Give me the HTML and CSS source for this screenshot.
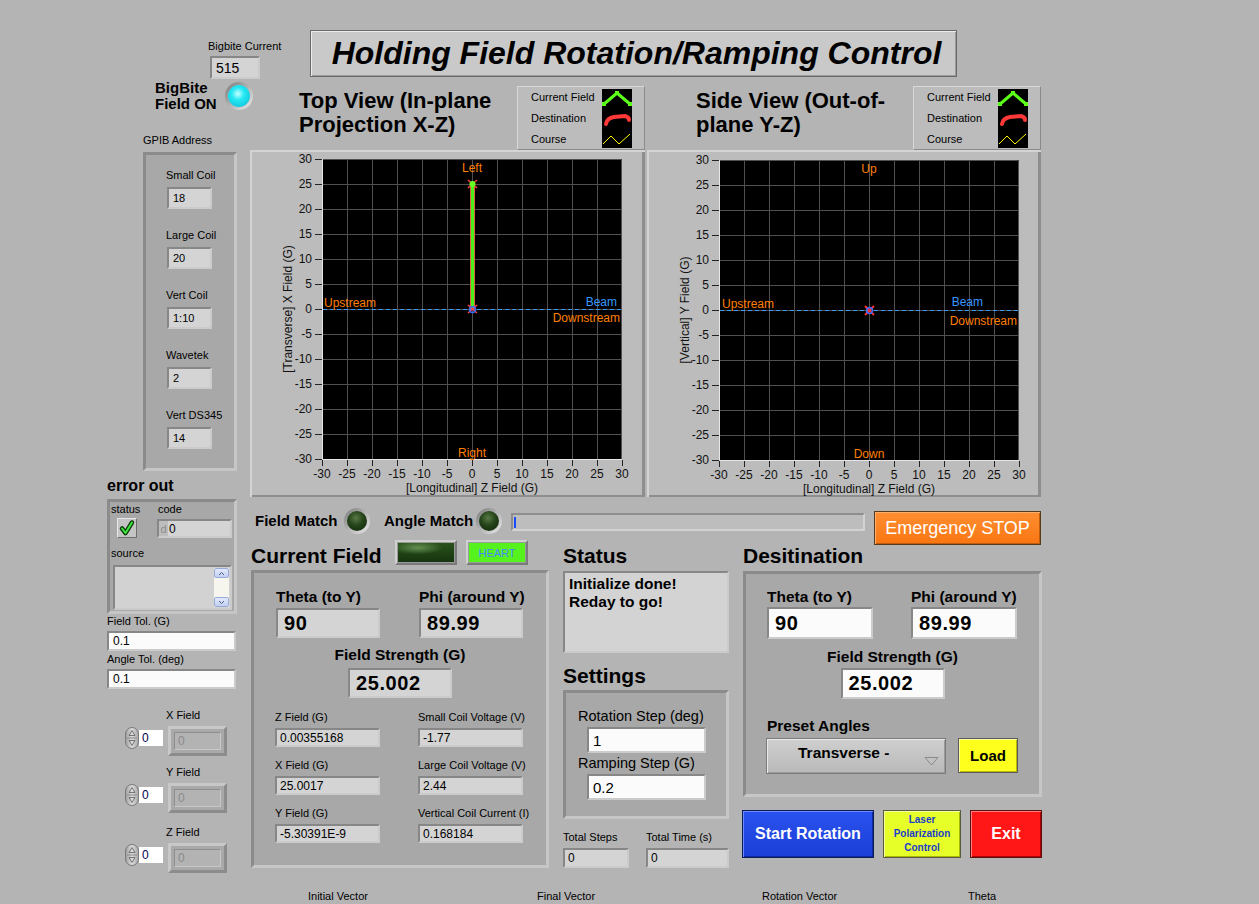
FILE: index.html
```html
<!DOCTYPE html>
<html>
<head>
<meta charset="utf-8">
<title>Holding Field Rotation/Ramping Control</title>
<link rel="stylesheet" href="styles.css">
</head>
<body>
<div class="page">
  <aside class="side">
    <div class="bbc">
      <div class="lbl">Bigbite Current</div>
      <div class="box ind bbc-box">515</div>
    </div>
    <div class="bbon">
      <div class="bbon-txt">BigBite<br>Field ON</div>
      <div class="led led-cyan"><span></span></div>
    </div>
    <div class="lbl gpib-lbl">GPIB Address</div>
    <div class="panel gpib">
      <div class="gitem"><div class="lbl">Small Coil</div><div class="box ind gbox">18</div></div>
      <div class="gitem"><div class="lbl">Large Coil</div><div class="box ind gbox">20</div></div>
      <div class="gitem"><div class="lbl">Vert Coil</div><div class="box ind gbox">1:10</div></div>
      <div class="gitem"><div class="lbl">Wavetek</div><div class="box ind gbox">2</div></div>
      <div class="gitem"><div class="lbl">Vert DS345</div><div class="box ind gbox">14</div></div>
    </div>
    <div class="errh">error out</div>
    <div class="panel errc">
      <div class="err-row">
        <div class="err-status">
          <div class="lbl">status</div>
          <div class="chk"><svg width="18" height="18" viewBox="0 0 18 18"><path d="M4 9.5 L7.5 14 L14 3.5" stroke="#0b3a0b" stroke-width="4.5" fill="none" stroke-linecap="round" stroke-linejoin="round"/><path d="M4 9.5 L7.5 14 L14 3.5" stroke="#3ee63e" stroke-width="2" fill="none" stroke-linecap="round" stroke-linejoin="round"/></svg></div>
        </div>
        <div class="err-code">
          <div class="lbl">code</div>
          <div class="box ind codebox"><span class="radix">d</span><span>0</span></div>
        </div>
      </div>
      <div class="lbl src-lbl">source</div>
      <div class="box ind srcbox">
        <div class="scroll">
          <div class="sb-btn"><svg width="9" height="5" viewBox="0 0 9 5"><path d="M2 4 L4.5 1.5 L7 4" stroke="#4a5a8a" fill="none"/></svg></div>
          <div class="sb-btn"><svg width="9" height="5" viewBox="0 0 9 5"><path d="M2 1 L4.5 3.5 L7 1" stroke="#4a5a8a" fill="none"/></svg></div>
        </div>
      </div>
    </div>
    <div class="lbl tol-lbl">Field Tol. (G)</div>
    <div class="box ctl tolbox">0.1</div>
    <div class="lbl tol-lbl2">Angle Tol. (deg)</div>
    <div class="box ctl tolbox">0.1</div>

    <div class="xyz first">
      <div class="lbl xyz-lbl">X Field</div>
      <div class="xyz-row">
        <div class="spin"><svg width="14" height="22" viewBox="0 0 14 22"><defs><linearGradient id="sg" x1="0" y1="0" x2="1" y2="0"><stop offset="0" stop-color="#9c9c9c"/><stop offset="0.5" stop-color="#dedede"/><stop offset="1" stop-color="#a4a4a4"/></linearGradient></defs><rect x="0.5" y="0.5" width="13" height="21" rx="6.5" fill="url(#sg)" stroke="#7a7a7a"/><path d="M4 8.5 L7 3.5 L10 8.5 Z M4 13.5 L7 18.5 L10 13.5 Z" fill="none" stroke="#6a6a6a" stroke-width="0.9"/><path d="M2 11H12" stroke="#8a8a8a"/></svg></div>
        <div class="xin">0</div>
        <div class="xind"><span>0</span></div>
      </div>
    </div>
    <div class="xyz">
      <div class="lbl xyz-lbl">Y Field</div>
      <div class="xyz-row">
        <div class="spin"><svg width="14" height="22" viewBox="0 0 14 22"><rect x="0.5" y="0.5" width="13" height="21" rx="6.5" fill="url(#sg)" stroke="#7a7a7a"/><path d="M4 8.5 L7 3.5 L10 8.5 Z M4 13.5 L7 18.5 L10 13.5 Z" fill="none" stroke="#6a6a6a" stroke-width="0.9"/><path d="M2 11H12" stroke="#8a8a8a"/></svg></div>
        <div class="xin">0</div>
        <div class="xind"><span>0</span></div>
      </div>
    </div>
    <div class="xyz last">
      <div class="lbl xyz-lbl">Z Field</div>
      <div class="xyz-row">
        <div class="spin"><svg width="14" height="22" viewBox="0 0 14 22"><rect x="0.5" y="0.5" width="13" height="21" rx="6.5" fill="url(#sg)" stroke="#7a7a7a"/><path d="M4 8.5 L7 3.5 L10 8.5 Z M4 13.5 L7 18.5 L10 13.5 Z" fill="none" stroke="#6a6a6a" stroke-width="0.9"/><path d="M2 11H12" stroke="#8a8a8a"/></svg></div>
        <div class="xin">0</div>
        <div class="xind"><span>0</span></div>
      </div>
    </div>
  </aside>

  <main class="main">
    <div class="title">Holding Field Rotation/Ramping Control</div>

    <div class="graphs">
      <div class="graph">
        <div class="ghead">
          <div class="gtitle">Top View (In-plane<br>Projection X-Z)</div>
          <div class="legend">
            <div class="leg-lbls"><div>Current Field</div><div>Destination</div><div>Course</div></div>
            <div class="leg-sw">
              <svg width="30" height="19" viewBox="0 0 30 19"><polyline points="2,15 8,10 15,4 22,10 28,15" stroke="#5cff1a" stroke-width="3" fill="none"/><rect x="0" y="13" width="4" height="4" fill="#5cff1a"/><rect x="13" y="2" width="4" height="4" fill="#5cff1a"/><rect x="26" y="13" width="4" height="4" fill="#5cff1a"/></svg>
              <svg width="30" height="19" viewBox="0 0 30 19"><path d="M4 15 Q5 9 12 8 L23 7 Q27 8 27 11" stroke="#ff3838" stroke-width="4" fill="none" stroke-linecap="round"/></svg>
              <svg width="30" height="19" viewBox="0 0 30 19"><polyline points="1,15 9,7 17,15 28,5" stroke="#ffff00" stroke-width="1" fill="none"/></svg>
            </div>
          </div>
        </div>
        <div class="pframe">
          <svg class="plot" width="395" height="347" viewBox="0 0 395 347">
            <rect x="72" y="9" width="300" height="300" fill="#000"/>
            <path d="M97.5 9V309M122.5 9V309M147.5 9V309M172.5 9V309M197.5 9V309M222.5 9V309M247.5 9V309M272.5 9V309M297.5 9V309M322.5 9V309M347.5 9V309M72 34.5H372M72 59.5H372M72 84.5H372M72 109.5H372M72 134.5H372M72 159.5H372M72 184.5H372M72 209.5H372M72 234.5H372M72 259.5H372M72 284.5H372M72 9.5H371.5V309" stroke="#505050" fill="none"/>
            <path d="M72.5 9V309.5H372" stroke="#e6e6e6" fill="none"/>
            <path d="M65 9.5H72M65 34.5H72M65 59.5H72M65 84.5H72M65 109.5H72M65 134.5H72M65 159.5H72M65 184.5H72M65 209.5H72M65 234.5H72M65 259.5H72M65 284.5H72M65 309.5H72M72.5 310V316M97.5 310V316M122.5 310V316M147.5 310V316M172.5 310V316M197.5 310V316M222.5 310V316M247.5 310V316M272.5 310V316M297.5 310V316M322.5 310V316M347.5 310V316M372.5 310V316" stroke="#222" fill="none"/>
            <g class="tk" text-anchor="end">
              <text x="62" y="13">30</text><text x="62" y="38">25</text><text x="62" y="63">20</text><text x="62" y="88">15</text><text x="62" y="113">10</text><text x="62" y="138">5</text><text x="62" y="163">0</text><text x="62" y="188">-5</text><text x="62" y="213">-10</text><text x="62" y="238">-15</text><text x="62" y="263">-20</text><text x="62" y="288">-25</text><text x="62" y="313">-30</text>
            </g>
            <g class="tk" text-anchor="middle">
              <text x="72" y="328">-30</text><text x="97" y="328">-25</text><text x="122" y="328">-20</text><text x="147" y="328">-15</text><text x="172" y="328">-10</text><text x="197" y="328">-5</text><text x="222" y="328">0</text><text x="247" y="328">5</text><text x="272" y="328">10</text><text x="297" y="328">15</text><text x="322" y="328">20</text><text x="347" y="328">25</text><text x="372" y="328">30</text>
            </g>
            <text class="tk" x="222" y="342" text-anchor="middle">[Longitudinal] Z Field (G)</text>
            <text class="tk" transform="translate(42 159) rotate(-90)" text-anchor="middle">[Transverse] X Field (G)</text>
            <path d="M73 159.5H372" stroke="#3d9bff" stroke-dasharray="4 3"/>
            <path d="M222.5 34V159" stroke="#ff4444" stroke-width="5"/>
            <path d="M222.5 34V159" stroke="#4cf01a" stroke-width="3.4"/>
            <path d="M218 30L227 38M227 30L218 38M218 155L227 163M227 155L218 163" stroke="#ff4040" stroke-width="1.6"/>
            <circle cx="222.5" cy="34" r="3" fill="#66ff22"/>
            <circle cx="222.5" cy="159.5" r="3" fill="none" stroke="#3a6cff" stroke-width="1.5"/>
            <text class="pl" x="222" y="22" text-anchor="middle">Left</text>
            <text class="pl" x="222" y="307" text-anchor="middle">Right</text>
            <text class="pl" x="74" y="157">Upstream</text>
            <text class="pl pb" x="367" y="156" text-anchor="end">Beam</text>
            <text class="pl" x="370" y="172" text-anchor="end">Downstream</text>
          </svg>
        </div>
      </div>

      <div class="graph g2">
        <div class="ghead">
          <div class="gtitle">Side View (Out-of-<br>plane Y-Z)</div>
          <div class="legend">
            <div class="leg-lbls"><div>Current Field</div><div>Destination</div><div>Course</div></div>
            <div class="leg-sw">
              <svg width="30" height="19" viewBox="0 0 30 19"><polyline points="2,15 8,10 15,4 22,10 28,15" stroke="#5cff1a" stroke-width="3" fill="none"/><rect x="0" y="13" width="4" height="4" fill="#5cff1a"/><rect x="13" y="2" width="4" height="4" fill="#5cff1a"/><rect x="26" y="13" width="4" height="4" fill="#5cff1a"/></svg>
              <svg width="30" height="19" viewBox="0 0 30 19"><path d="M4 15 Q5 9 12 8 L23 7 Q27 8 27 11" stroke="#ff3838" stroke-width="4" fill="none" stroke-linecap="round"/></svg>
              <svg width="30" height="19" viewBox="0 0 30 19"><polyline points="1,15 9,7 17,15 28,5" stroke="#ffff00" stroke-width="1" fill="none"/></svg>
            </div>
          </div>
        </div>
        <div class="pframe">
          <svg class="plot" width="394" height="347" viewBox="0 -1 394 347">
            <rect x="72" y="9" width="300" height="300" fill="#000"/>
            <path d="M97.5 9V309M122.5 9V309M147.5 9V309M172.5 9V309M197.5 9V309M222.5 9V309M247.5 9V309M272.5 9V309M297.5 9V309M322.5 9V309M347.5 9V309M72 34.5H372M72 59.5H372M72 84.5H372M72 109.5H372M72 134.5H372M72 159.5H372M72 184.5H372M72 209.5H372M72 234.5H372M72 259.5H372M72 284.5H372M72 9.5H371.5V309" stroke="#505050" fill="none"/>
            <path d="M72.5 9V309.5H372" stroke="#e6e6e6" fill="none"/>
            <path d="M65 9.5H72M65 34.5H72M65 59.5H72M65 84.5H72M65 109.5H72M65 134.5H72M65 159.5H72M65 184.5H72M65 209.5H72M65 234.5H72M65 259.5H72M65 284.5H72M65 309.5H72M72.5 310V316M97.5 310V316M122.5 310V316M147.5 310V316M172.5 310V316M197.5 310V316M222.5 310V316M247.5 310V316M272.5 310V316M297.5 310V316M322.5 310V316M347.5 310V316M372.5 310V316" stroke="#222" fill="none"/>
            <g class="tk" text-anchor="end">
              <text x="62" y="13">30</text><text x="62" y="38">25</text><text x="62" y="63">20</text><text x="62" y="88">15</text><text x="62" y="113">10</text><text x="62" y="138">5</text><text x="62" y="163">0</text><text x="62" y="188">-5</text><text x="62" y="213">-10</text><text x="62" y="238">-15</text><text x="62" y="263">-20</text><text x="62" y="288">-25</text><text x="62" y="313">-30</text>
            </g>
            <g class="tk" text-anchor="middle">
              <text x="72" y="328">-30</text><text x="97" y="328">-25</text><text x="122" y="328">-20</text><text x="147" y="328">-15</text><text x="172" y="328">-10</text><text x="197" y="328">-5</text><text x="222" y="328">0</text><text x="247" y="328">5</text><text x="272" y="328">10</text><text x="297" y="328">15</text><text x="322" y="328">20</text><text x="347" y="328">25</text><text x="372" y="328">30</text>
            </g>
            <text class="tk" x="222" y="342" text-anchor="middle">[Longitudinal] Z Field (G)</text>
            <text class="tk" transform="translate(42 159) rotate(-90)" text-anchor="middle">[Vertical] Y Field (G)</text>
            <path d="M73 159.5H372" stroke="#3d9bff" stroke-dasharray="4 3"/>
            <path d="M218 155L227 164M227 155L218 164" stroke="#ff3030" stroke-width="2"/>
            <circle cx="222.5" cy="159.5" r="3" fill="none" stroke="#3a6cff" stroke-width="1.5"/>
            <text class="pl" x="222" y="22" text-anchor="middle">Up</text>
            <text class="pl" x="222" y="307" text-anchor="middle">Down</text>
            <text class="pl" x="75" y="157">Upstream</text>
            <text class="pl pb" x="336" y="155" text-anchor="end">Beam</text>
            <text class="pl" x="370" y="174" text-anchor="end">Downstream</text>
          </svg>
        </div>
      </div>
    </div>

    <div class="match">
      <div class="mtxt mt1">Field Match</div>
      <div class="led led-green sm"><span></span></div>
      <div class="mtxt mt2">Angle Match</div>
      <div class="led led-green sm"><span></span></div>
      <div class="prog"><span></span></div>
      <div class="btn estop">Emergency STOP</div>
    </div>

    <div class="cards">
      <div class="col1">
        <div class="chead">
          <div class="htxt">Current Field</div>
          <div class="rled"><span></span></div>
          <div class="heart"><span>HEART</span></div>
        </div>
        <div class="panel cpanel">
          <div class="pair">
            <div class="fld"><div class="blbl">Theta (to Y)</div><div class="box ind bigbox">90</div></div>
            <div class="fld"><div class="blbl">Phi (around Y)</div><div class="box ind bigbox">89.99</div></div>
          </div>
          <div class="fs">
            <div class="blbl">Field Strength (G)</div>
            <div class="box ind bigbox">25.002</div>
          </div>
          <div class="sgrid">
            <div class="sfld"><div class="lbl">Z Field (G)</div><div class="box ind sbox">0.00355168</div></div>
            <div class="sfld"><div class="lbl">Small Coil Voltage (V)</div><div class="box ind sbox">-1.77</div></div>
            <div class="sfld"><div class="lbl">X Field (G)</div><div class="box ind sbox">25.0017</div></div>
            <div class="sfld"><div class="lbl">Large Coil Voltage (V)</div><div class="box ind sbox">2.44</div></div>
            <div class="sfld"><div class="lbl">Y Field (G)</div><div class="box ind sbox">-5.30391E-9</div></div>
            <div class="sfld"><div class="lbl">Vertical Coil Current (I)</div><div class="box ind sbox">0.168184</div></div>
          </div>
        </div>
      </div>

      <div class="col2">
        <div class="htxt">Status</div>
        <div class="box stbox">Initialize done!<br>Reday to go!</div>
        <div class="htxt set-h">Settings</div>
        <div class="panel spanel">
          <div class="rlbl">Rotation Step (deg)</div>
          <div class="box ctl rbox">1</div>
          <div class="rlbl r2">Ramping Step (G)</div>
          <div class="box ctl rbox">0.2</div>
        </div>
        <div class="totals">
          <div class="tot"><div class="lbl">Total Steps</div><div class="box ind totbox">0</div></div>
          <div class="tot t2"><div class="lbl">Total Time (s)</div><div class="box ind totbox">0</div></div>
        </div>
      </div>

      <div class="col3">
        <div class="htxt">Desitination</div>
        <div class="panel dpanel">
          <div class="pair">
            <div class="fld dfld"><div class="blbl">Theta (to Y)</div><div class="box ctl bigbox dbox">90</div></div>
            <div class="fld dfld"><div class="blbl">Phi (around Y)</div><div class="box ctl bigbox dbox">89.99</div></div>
          </div>
          <div class="fs dfs">
            <div class="blbl">Field Strength (G)</div>
            <div class="box ctl bigbox dbox2">25.002</div>
          </div>
          <div class="blbl preset-lbl">Preset Angles</div>
          <div class="preset-row">
            <div class="dropdown"><span>Transverse -</span><svg width="15" height="10" viewBox="0 0 15 10"><path d="M1 1.5 H14 L7.5 9 Z" fill="none" stroke="#8a8a8a"/></svg></div>
            <div class="btn load">Load</div>
          </div>
        </div>
        <div class="btns">
          <div class="btn start">Start Rotation</div>
          <div class="btn laser">Laser<br>Polarization<br>Control</div>
          <div class="btn exit">Exit</div>
        </div>
      </div>
    </div>

    <div class="vlabels">
      <span class="v1">Initial Vector</span>
      <span class="v2">Final Vector</span>
      <span class="v3">Rotation Vector</span>
      <span>Theta</span>
    </div>
  </main>
</div>
</body>
</html>
```

FILE: styles.css
```css
* { box-sizing: border-box; }
body {
  margin: 0;
  background: #b4b4b4;
  font-family: "Liberation Sans", Arial, sans-serif;
  color: #000;
  width: 1259px;
  height: 904px;
  overflow: hidden;
}
.page { display: flex; align-items: flex-start; }
.side { width: 143px; margin-left: 107px; flex: none; display: flex; flex-direction: column; align-items: flex-start; }
.main { width: 791px; flex: none; display: flex; flex-direction: column; align-items: flex-start; }

.lbl { font-size: 11px; line-height: 13px; white-space: nowrap; }
.box {
  border: 2px solid;
  border-color: #878787 #cbcbcb #cbcbcb #878787;
  display: flex;
  align-items: center;
  padding-left: 3px;
  font-size: 11px;
  white-space: nowrap;
  flex: none;
}
.ind { background: #d4d4d4; }
.ctl { background: #fbfbfb; }
.panel {
  background: #a8a8a8;
  border: 3px solid;
  border-color: #8b8b8b #c6c6c6 #c6c6c6 #8b8b8b;
}

/* side column */
.bbc { margin: 40px 0 0 101px; }
.bbc-box { width: 50px; height: 23px; margin: 3px 0 0 2px; font-size: 14px; padding-left: 4px; }
.bbon { display: flex; align-items: center; gap: 5px; margin: 1px 0 0 48px; }
.bbon-txt { font-weight: bold; font-size: 15px; line-height: 16px; width: 65px; }
.led {
  width: 28px; height: 28px; border-radius: 50%;
  background: linear-gradient(135deg, #7a7a7a, #ececec);
  display: flex; align-items: center; justify-content: center; flex: none;
}
.led span { width: 22px; height: 22px; border-radius: 50%; display: block; }
.led-cyan span { background: radial-gradient(circle at 45% 40%, #c6ffff 0, #26e8f4 35%, #10c2da 85%); }
.led.sm { width: 26px; height: 26px; }
.led.sm span { width: 20px; height: 20px; }
.led-green span { background: radial-gradient(circle at 45% 35%, #587a44 0, #24431a 45%, #142a0b 90%); }

.gpib-lbl { margin: 22px 0 0 36px; }
.gpib { width: 94px; height: 319px; margin: 5px 0 0 36px; padding: 14px 0 0 20px; display: flex; flex-direction: column; gap: 20px; }
.gbox { width: 45px; height: 22px; margin: 5px 0 0 1px; padding-left: 4px; }

.errh { font-weight: bold; font-size: 16px; line-height: 18px; margin-top: 6px; }
.errc { width: 130px; height: 115px; margin-top: 4px; padding: 1px 0 0 0; }
.err-row { display: flex; }
.err-status { width: 47px; padding-left: 1px; }
.chk {
  width: 20px; height: 20px; margin: 2px 0 0 6px;
  background: #c4c4c4;
  border: 1px solid;
  border-color: #e8e8e8 #6e6e6e #6e6e6e #e8e8e8;
  display: flex; align-items: center; justify-content: center;
}
.err-code .lbl { padding-left: 1px; }
.codebox { width: 75px; height: 19px; margin-top: 3px; padding: 0; font-size: 12px; }
.radix { width: 9px; height: 100%; background: #bdbdbd; color: #8a8a8a; font-size: 11px; display: flex; align-items: center; justify-content: center; margin-right: 1px; }
.src-lbl { margin: 9px 0 0 1px; }
.srcbox { width: 119px; height: 45px; margin: 5px 0 0 3px; justify-content: flex-end; padding: 0 1px 0 0; background: #d2d2d2; }
.scroll { width: 15px; height: 39px; background: #f6f6ee; display: flex; flex-direction: column; justify-content: space-between; }
.sb-btn { height: 10px; background: linear-gradient(#e2e9fb, #c2d0f2); border: 1px solid #98aad8; border-radius: 2px; display: flex; align-items: center; justify-content: center; }

.tol-lbl { margin-top: 1px; }
.tolbox { width: 129px; height: 20px; margin-top: 3px; font-size: 12px; padding-left: 4px; }
.tol-lbl2 { margin-top: 2px; }

.xyz { margin: 10px 0 0 18px; }
.xyz.first { margin-top: 20px; }
.xyz.last { margin-top: 13px; }
.xyz-lbl { margin-left: 41px; }
.xyz-row { display: flex; align-items: center; margin-top: 4px; height: 30px; }
.spin { width: 14px; height: 22px; margin-top: -6px; }
.spin svg { display: block; }
.xin { width: 24px; height: 16px; margin-top: -6px; background: #fff; font-size: 12px; line-height: 16px; color: #000050; padding-left: 3px; }
.xind {
  width: 59px; height: 30px; margin-left: 5px;
  background: #a9a9a9;
  border: 3px solid;
  border-color: #c8c8c8 #8c8c8c #8c8c8c #c8c8c8;
  padding: 3px;
}
.xind span {
  display: flex; align-items: center; height: 100%;
  background: #b3b3b3;
  border: 1px solid;
  border-color: #8e8e8e #c8c8c8 #c8c8c8 #8e8e8e;
  color: #8a8a8a; font-size: 12px; padding-left: 3px;
}

/* main column */
.title {
  margin: 30px 0 0 60px;
  width: 647px; height: 47px;
  background: #c9c9c9;
  border: 1px solid #6a6a6a;
  box-shadow: inset 1px 1px 0 #ececec, inset -1px -1px 0 #9a9a9a;
  font-style: italic; font-weight: bold; font-size: 32px; line-height: 44px;
  text-align: center; padding-left: 6px;
  white-space: nowrap;
}
.graphs { display: flex; margin-top: 8px; gap: 2px; }
.graph { width: 395px; height: 412px; display: flex; flex-direction: column; }
.graph.g2 { width: 394px; }
.ghead { height: 65px; display: flex; align-items: flex-start; }
.gtitle { font-weight: bold; font-size: 22px; line-height: 24px; margin: 4px 0 0 49px; width: 210px; white-space: nowrap; }
.legend {
  margin-left: auto; margin-top: 1px;
  width: 128px; height: 64px;
  display: flex;
  background: #bcbcbc;
  border: 1px solid;
  border-color: #d8d8d8 #8a8a8a #8a8a8a #d8d8d8;
  padding: 0 0 0 13px;
}
.leg-lbls { width: 71px; font-size: 11px; }
.leg-lbls div { height: 21px; line-height: 21px; white-space: nowrap; }
.leg-sw { width: 30px; height: 59px; margin-top: 2px; background: #000; display: flex; flex-direction: column; justify-content: space-between; }
.leg-sw svg { display: block; }
.pframe {
  height: 347px;
  background: #bcbcbc;
  box-shadow: inset 2px 2px 0 #d4d4d4, inset -3px -2px 0 #8e8e8e;
}
.plot { display: block; }
.tk { font-family: "Liberation Sans", Arial, sans-serif; font-size: 12px; fill: #111; }
.pl { font-family: "Liberation Sans", Arial, sans-serif; font-size: 12px; fill: #ff7f00; }
.pl.pb { fill: #3a96ff; }

.match { display: flex; align-items: flex-start; height: 35px; margin-top: 8px; }
.mtxt { font-weight: bold; font-size: 15px; line-height: 18px; margin-top: 7px; white-space: nowrap; }
.mt1 { margin-left: 5px; width: 89px; }
.mt2 { margin-left: 14px; width: 92px; }
.match .led { margin-top: 3px; }
.prog {
  width: 354px; height: 18px; margin: 8px 0 0 9px;
  background: #bdbdbd;
  border: 2px solid;
  border-color: #8e8e8e #d2d2d2 #d2d2d2 #8e8e8e;
  padding: 2px 0 0 1px;
}
.prog span { display: block; width: 2px; height: 11px; background: #1a4cff; }
.btn { display: flex; align-items: center; justify-content: center; text-align: center; white-space: nowrap; flex: none; }
.estop {
  width: 167px; height: 34px; margin: 6px 0 0 9px;
  background: linear-gradient(#ff8e30, #f97612);
  border: 1px solid #5a3a1a;
  box-shadow: inset 1px 1px 0 #ffb06e, inset -1px -1px 0 #c25c0a;
  color: #fff; font-size: 18px;
}

.cards { display: flex; height: 328px; align-items: flex-start; }
.htxt { font-weight: bold; font-size: 21px; line-height: 24px; margin-top: 4px; white-space: nowrap; }
.col1 { width: 298px; margin-left: 1px; flex: none; }
.chead { display: flex; height: 30px; align-items: flex-start; }
.col1 .htxt { width: 144px; }
.rled {
  width: 62px; height: 25px;
  background: #9a9a9a;
  border: 2px solid;
  border-color: #d0d0d0 #7a7a7a #7a7a7a #d0d0d0;
  padding: 1px;
}
.rled span {
  display: block; width: 100%; height: 100%;
  background: radial-gradient(ellipse 45% 35% at 35% 25%, rgba(150, 200, 130, 0.55), rgba(150, 200, 130, 0) 100%), linear-gradient(#2a521a, #163410);
}
.heart {
  width: 62px; height: 25px; margin-left: 9px;
  background: #9a9a9a;
  border: 2px solid;
  border-color: #d0d0d0 #7a7a7a #7a7a7a #d0d0d0;
  padding: 1px;
}
.heart span {
  display: flex; align-items: center; justify-content: center;
  width: 100%; height: 100%;
  background: #56f21e;
  color: #4a88ff; font-size: 11px;
}
.cpanel { width: 298px; height: 298px; padding: 15px 0 0 22px; }
.pair { display: flex; }
.fld { width: 143px; flex: none; }
.blbl { font-weight: bold; font-size: 15.5px; line-height: 18px; white-space: nowrap; }
.bigbox { width: 104px; height: 30px; margin-top: 2px; font-weight: bold; font-size: 20px; letter-spacing: 0.6px; padding-left: 6px; }
.fs { display: flex; flex-direction: column; align-items: center; margin: 8px 0 0 -22px; width: 292px; }
.fs .bigbox { margin-top: 4px; }
.sgrid { display: grid; grid-template-columns: 143px 143px; row-gap: 12px; margin: 13px 0 0 -1px; }
.sfld { display: flex; flex-direction: column; align-items: flex-start; }
.sbox { width: 105px; height: 19px; margin-top: 4px; font-size: 12px; padding-left: 3px; }

.col2 { width: 165px; margin-left: 14px; flex: none; }
.stbox {
  width: 166px; height: 82px; margin-top: 3px;
  background: #d3d3d3;
  align-items: flex-start;
  padding: 2px 0 0 4px;
  font-weight: bold; font-size: 15.5px; line-height: 18px;
}
.set-h { margin-top: 11px; }
.spanel { width: 166px; height: 129px; margin-top: 2px; padding: 15px 0 0 12px; }
.rlbl { font-size: 14.5px; line-height: 17px; white-space: nowrap; }
.r2 { margin-top: 2px; }
.rbox { width: 119px; height: 26px; margin: 2px 0 0 9px; font-size: 15px; padding-left: 4px; }
.totals { display: flex; margin-top: 12px; }
.tot { width: 66px; flex: none; }
.tot.t2 { width: 83px; margin-left: 17px; }
.totbox { width: 100%; height: 20px; margin-top: 4px; font-size: 12px; }

.col3 { width: 298px; margin-left: 15px; flex: none; }
.dpanel { width: 299px; height: 226px; margin-top: 3px; padding: 14px 0 0 21px; }
.dfld { width: 144px; }
.dbox { width: 106px; height: 32px; margin-top: 1px; }
.dfs { margin: 9px 0 0 -21px; width: 293px; }
.dfs .dbox2 { width: 104px; height: 31px; margin-top: 2px; }
.preset-lbl { margin-top: 18px; }
.preset-row { display: flex; margin: 3px 0 0 -1px; }
.dropdown {
  width: 180px; height: 36px; flex: none;
  background: linear-gradient(#cfcfcf, #b9b9b9);
  border: 1px solid #7c7c7c;
  box-shadow: inset 1px 1px 0 #e8e8e8, inset -1px -1px 0 #9a9a9a;
  display: flex; align-items: flex-start; justify-content: space-between;
  padding: 5px 6px 0 31px;
  font-weight: bold; font-size: 15.5px; line-height: 18px;
}
.dropdown svg { margin-top: 12px; }
.load {
  width: 60px; height: 35px; margin-left: 12px;
  background: #ffff1e;
  border: 1px solid #5a5a5a;
  box-shadow: inset 1px 1px 0 #ffffa0, inset -1px -1px 0 #b8b800;
  font-weight: bold; font-size: 15px;
}
.btns { display: flex; margin: 13px 0 0 -1px; }
.start {
  width: 132px; height: 48px;
  background: linear-gradient(#2a52ee, #1a3ed8);
  border: 1px solid #0c1a5a;
  box-shadow: inset 1px 1px 0 #6f8cff, inset -1px -1px 0 #0e2aa0;
  color: #fff; font-weight: bold; font-size: 16px;
}
.laser {
  width: 78px; height: 48px; margin-left: 9px;
  background: #e6ff28;
  border: 1px solid #5a5a40;
  box-shadow: inset 1px 1px 0 #f6ffa0, inset -1px -1px 0 #a8b800;
  color: #1c3ccc; font-weight: bold; font-size: 10px; line-height: 14px;
}
.exit {
  width: 72px; height: 48px; margin-left: 9px;
  background: #ff1616;
  border: 1px solid #5a1010;
  box-shadow: inset 1px 1px 0 #ff8080, inset -1px -1px 0 #b00000;
  color: #fff; font-weight: bold; font-size: 16px;
}

.vlabels { display: flex; margin-top: 22px; font-size: 11px; line-height: 13px; white-space: nowrap; }
.v1 { margin-left: 58px; width: 229px; }
.v2 { width: 225px; }
.v3 { width: 206px; }
```
